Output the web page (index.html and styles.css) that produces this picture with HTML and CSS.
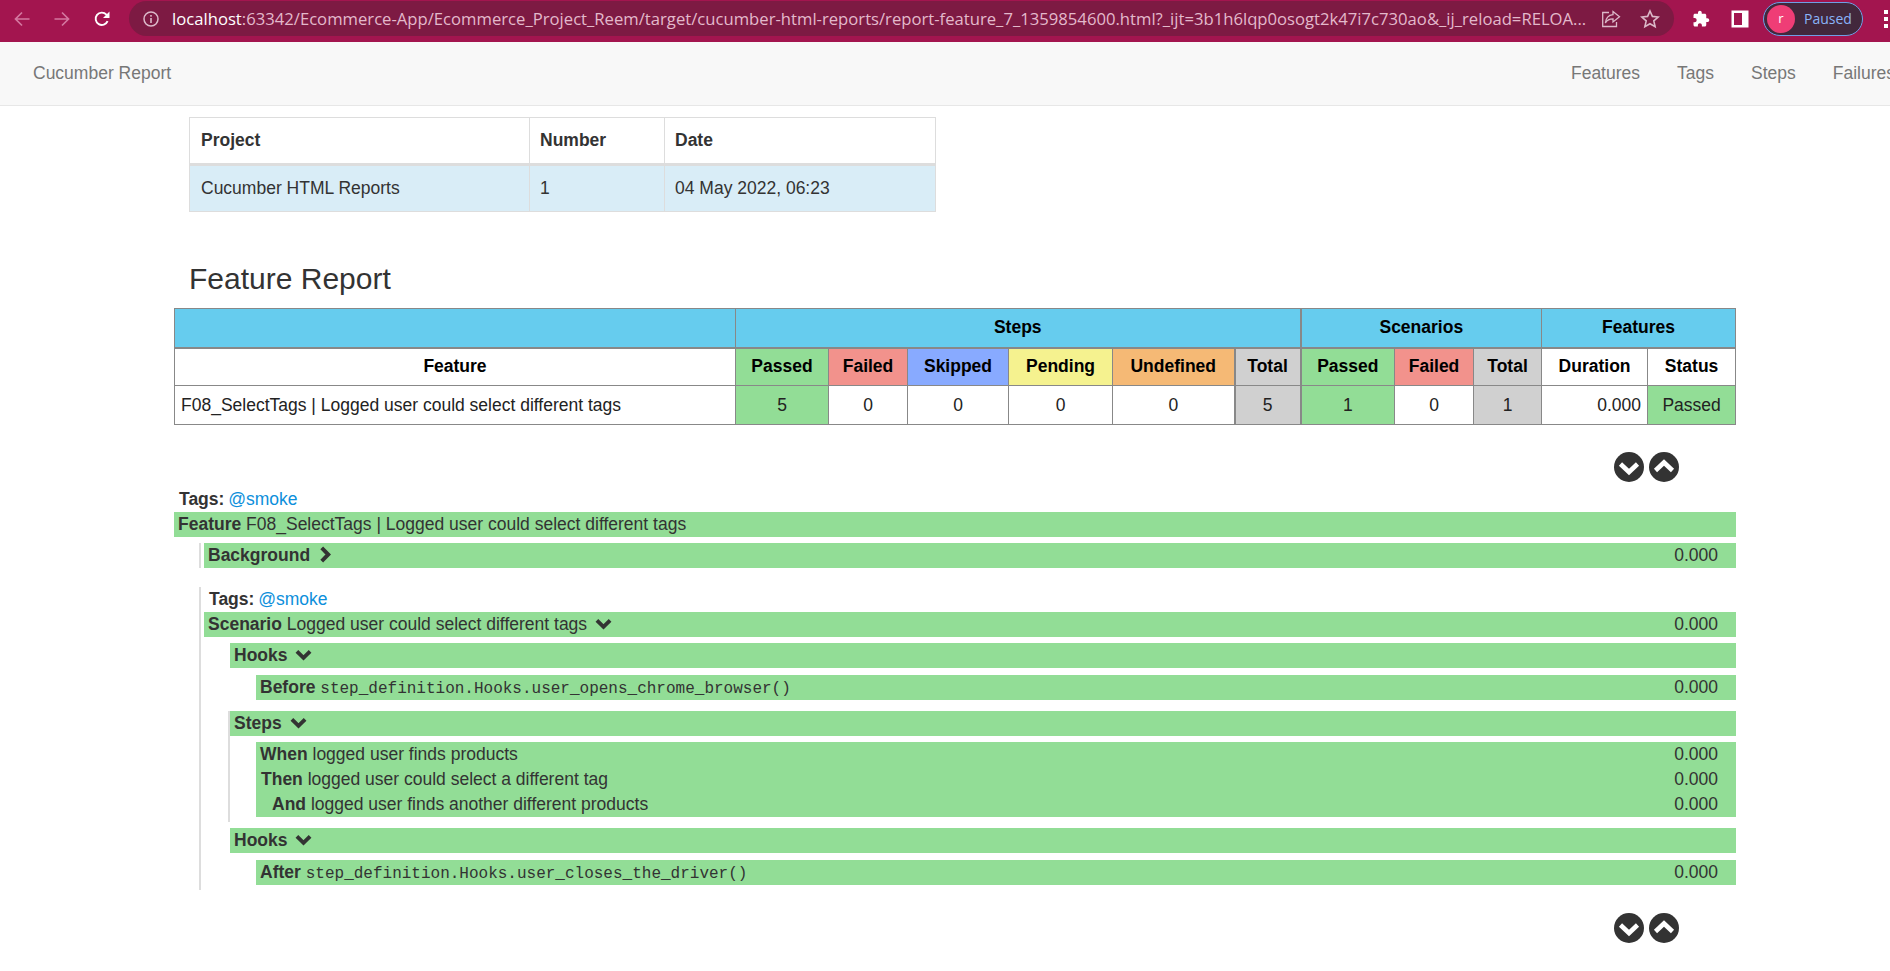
FILE: index.html
```html
<!DOCTYPE html>
<html lang="en">
<head>
    <meta charset="UTF-8">
    <title>Cucumber Report</title>
    <link rel="stylesheet" href="styles.css">
</head>
<body>
    <svg class="defs" width="0" height="0">
        <symbol id="chev-down" viewBox="0 0 16 11"><polyline points="1.8,2 8,8.2 14.2,2" fill="none" stroke="#333" stroke-width="3.6"/></symbol>
        <symbol id="chev-right" viewBox="0 0 11 15"><polyline points="2.5,1.5 8.5,7.5 2.5,13.5" fill="none" stroke="#333" stroke-width="3.6"/></symbol>
        <symbol id="btn-down" viewBox="0 0 30 30"><circle cx="15" cy="15" r="15" fill="#333"/><polyline points="6.5,12 15,20 23.5,12" fill="none" stroke="#fff" stroke-width="4.6"/></symbol>
        <symbol id="btn-up" viewBox="0 0 30 30"><circle cx="15" cy="15" r="15" fill="#333"/><polyline points="6.5,18.5 15,10.5 23.5,18.5" fill="none" stroke="#fff" stroke-width="4.6"/></symbol>
    </svg>

    <div class="toolbar">
        <svg class="tool-icon dim" viewBox="0 0 18 18"><path d="M16.5 9H2.5M9 2.5L2.5 9L9 15.5" fill="none" stroke="currentColor" stroke-width="1.7"/></svg>
        <svg class="tool-icon dim" viewBox="0 0 18 18"><path d="M1.5 9H15.5M9 2.5L15.5 9L9 15.5" fill="none" stroke="currentColor" stroke-width="1.7"/></svg>
        <svg class="tool-icon" viewBox="0 0 18 18"><path d="M14.6 11.2A6.2 6.2 0 1 1 13.4 4.6L15.5 6.6" fill="none" stroke="currentColor" stroke-width="1.9"/><path d="M16.5 1.5V8H10Z" fill="currentColor"/></svg>
        <div class="omnibox">
            <svg class="info-icon" viewBox="0 0 18 18"><circle cx="9" cy="9" r="7" fill="none" stroke="currentColor" stroke-width="1.5"/><rect x="8.2" y="8" width="1.6" height="5" fill="currentColor"/><rect x="8.2" y="5" width="1.6" height="1.7" fill="currentColor"/></svg>
            <div class="url"><span class="host">localhost</span>:63342/Ecommerce-App/Ecommerce_Project_Reem/target/cucumber-html-reports/report-feature_7_1359854600.html?_ijt=3b1h6lqp0osogt2k47i7c730ao&amp;_ij_reload=RELOA...</div>
            <svg class="omni-icon share" viewBox="0 0 20 20"><path d="M12 2.5L18.5 7.8L12 13V9.9C8 9.9 5.8 11.5 4.4 14C4.8 9.6 7.4 6.2 12 5.7Z" fill="none" stroke="currentColor" stroke-width="1.3"/><path d="M8 3.5H1.7V17.5H15.5V13" fill="none" stroke="currentColor" stroke-width="1.3"/></svg>
            <svg class="omni-icon star" viewBox="0 0 20 20"><polygon points="10,2 12.4,7.4 18.2,8 13.8,11.9 15.1,17.7 10,14.7 4.9,17.7 6.2,11.9 1.8,8 7.6,7.4" fill="none" stroke="currentColor" stroke-width="1.6"/></svg>
        </div>
        <svg class="tool-icon puzzle" viewBox="0 0 24 24"><path fill="currentColor" d="M20.5 11H19V7c0-1.1-.9-2-2-2h-4V3.5C13 2.12 11.88 1 10.5 1S8 2.12 8 3.5V5H4c-1.1 0-1.99.9-1.99 2v3.8H3.5c1.49 0 2.7 1.21 2.7 2.7s-1.21 2.7-2.7 2.7H2V20c0 1.1.9 2 2 2h3.8v-1.5c0-1.49 1.21-2.7 2.7-2.7 1.49 0 2.7 1.21 2.7 2.7V22H17c1.1 0 2-.9 2-2v-4h1.5c1.38 0 2.5-1.12 2.5-2.5S21.88 11 20.5 11z"/></svg>
        <svg class="tool-icon panel" viewBox="0 0 18 18"><path fill="currentColor" fill-rule="evenodd" d="M0.5 0.5H17.5V17.5H0.5ZM3 3V15H11V3Z"/></svg>
        <div class="profile"><span class="avatar">r</span><span class="paused">Paused</span></div>
        <div class="dots"><i></i><i></i><i></i></div>
    </div>

    <nav class="navbar">
        <a class="brand">Cucumber Report</a>
        <div class="nav-links">
            <a>Features</a>
            <a>Tags</a>
            <a>Steps</a>
            <a>Failures</a>
        </div>
    </nav>

    <table class="info-table">
        <colgroup><col class="info-a"><col class="info-b"><col class="info-c"></colgroup>
        <thead>
            <tr><th>Project</th><th>Number</th><th>Date</th></tr>
        </thead>
        <tbody>
            <tr><td>Cucumber HTML Reports</td><td>1</td><td>04 May 2022, 06:23</td></tr>
        </tbody>
    </table>

    <h2 class="page-title">Feature Report</h2>

    <main class="report">
        <table class="stats">
            <colgroup>
                <col class="w-561"><col class="w-93"><col class="w-79"><col class="w-101"><col class="w-104"><col class="w-122"><col class="w-66">
                <col class="w-94"><col class="w-79"><col class="w-68"><col class="w-106"><col class="w-88">
            </colgroup>
            <tr class="head-row">
                <th class="sky"></th>
                <th class="sky" colspan="6">Steps</th>
                <th class="sky thick" colspan="3">Scenarios</th>
                <th class="sky" colspan="2">Features</th>
            </tr>
            <tr class="sub-row">
                <th>Feature</th>
                <th class="passed">Passed</th>
                <th class="failed">Failed</th>
                <th class="skipped">Skipped</th>
                <th class="pending">Pending</th>
                <th class="undefined">Undefined</th>
                <th class="total thick">Total</th>
                <th class="passed thick">Passed</th>
                <th class="failed">Failed</th>
                <th class="total">Total</th>
                <th>Duration</th>
                <th>Status</th>
            </tr>
            <tr class="data-row">
                <td class="left">F08_SelectTags | Logged user could select different tags</td>
                <td class="passed">5</td>
                <td>0</td>
                <td>0</td>
                <td>0</td>
                <td>0</td>
                <td class="total thick">5</td>
                <td class="passed thick">1</td>
                <td>0</td>
                <td class="total">1</td>
                <td class="duration">0.000</td>
                <td class="passed">Passed</td>
            </tr>
        </table>

        <div class="expand-btns top">
            <svg class="round-btn"><use href="#btn-down"/></svg>
            <svg class="round-btn"><use href="#btn-up"/></svg>
        </div>

        <div class="tags feature-tags"><b>Tags:</b> <a>@smoke</a></div>
        <div class="bar"><span><b>Feature</b> F08_SelectTags | Logged user could select different tags</span></div>

        <div class="rail background">
            <div class="bar"><span><b>Background</b><svg class="chev right"><use href="#chev-right"/></svg></span><span>0.000</span></div>
        </div>

        <div class="rail scenario">
            <div class="tags"><b>Tags:</b> <a>@smoke</a></div>
            <div class="bar"><span><b>Scenario</b> Logged user could select different tags<svg class="chev"><use href="#chev-down"/></svg></span><span>0.000</span></div>

            <div class="group hooks">
                <div class="bar"><span><b>Hooks</b><svg class="chev"><use href="#chev-down"/></svg></span></div>
                <div class="lines">
                    <div class="bar"><span><b>Before</b> <code>step_definition.Hooks.user_opens_chrome_browser()</code></span><span>0.000</span></div>
                </div>
            </div>

            <div class="group steps">
                <div class="bar"><span><b>Steps</b><svg class="chev"><use href="#chev-down"/></svg></span></div>
                <div class="lines step-lines">
                    <div class="bar"><span><b>When</b> logged user finds products</span><span>0.000</span></div>
                    <div class="bar"><span class="kw-then"><b>Then</b> logged user could select a different tag</span><span>0.000</span></div>
                    <div class="bar"><span class="kw-and"><b>And</b> logged user finds another different products</span><span>0.000</span></div>
                </div>
            </div>

            <div class="group hooks after-steps">
                <div class="bar"><span><b>Hooks</b><svg class="chev"><use href="#chev-down"/></svg></span></div>
                <div class="lines">
                    <div class="bar"><span><b>After</b> <code>step_definition.Hooks.user_closes_the_driver()</code></span><span>0.000</span></div>
                </div>
            </div>
        </div>

        <div class="expand-btns bottom">
            <svg class="round-btn"><use href="#btn-down"/></svg>
            <svg class="round-btn"><use href="#btn-up"/></svg>
        </div>
    </main>
</body>
</html>
```

FILE: styles.css
```css
html, body{
    margin: 0;
    height: 971px;
    overflow: hidden;
}
body{
    font-family: "Liberation Sans", Arial, sans-serif;
    font-size: 17.5px;
    color: #333;
    background: #fff;
}
.defs{
    display: block;
    height: 0;
}

/* browser chrome */
.toolbar{
    display: flex;
    align-items: center;
    height: 35px;
    padding: 1px 0 6px 13px;
    background: #a3154f;
    color: #fff;
    overflow: hidden;
}
.tool-icon{
    flex: none;
    width: 18px;
    height: 18px;
    margin-right: 22px;
}
.tool-icon.dim{
    color: #d477a0;
}
.omnibox{
    flex: none;
    display: flex;
    align-items: center;
    width: 1518px;
    height: 35px;
    margin-left: -4px;
    padding: 0 14px 0 13px;
    border-radius: 18px;
    background: #7d1a43;
    color: #dcb9c9;
}
.info-icon{
    flex: none;
    width: 18px;
    height: 18px;
    margin-right: 12px;
}
.url{
    flex: 1;
    overflow: hidden;
    white-space: nowrap;
    font-family: "Open Sans", sans-serif;
    font-size: 16.67px;
    color: #e3b9cb;
}
.host{
    color: #fff;
}
.omni-icon{
    flex: none;
    width: 20px;
    height: 20px;
    margin-left: 19px;
}
.omni-icon.share{
    margin-left: 12px;
}
.puzzle{
    margin-left: 18px;
    margin-right: 21px;
}
.panel{
    margin-right: 14px;
}
.profile{
    flex: none;
    display: flex;
    align-items: center;
    box-sizing: border-box;
    width: 100px;
    height: 34px;
    padding-left: 3px;
    border: 1px solid #6f9fe6;
    border-radius: 17px;
    background: #42283c;
}
.avatar{
    width: 28px;
    height: 28px;
    border-radius: 50%;
    background: #ef3d76;
    color: #fff;
    font-family: "Open Sans", sans-serif;
    font-size: 13px;
    line-height: 27px;
    text-align: center;
}
.paused{
    margin-left: 9px;
    font-family: "Open Sans", sans-serif;
    font-size: 14px;
    color: #8ab4f8;
}
.dots{
    flex: none;
    display: flex;
    flex-direction: column;
    gap: 3px;
    margin-left: 21px;
}
.dots i{
    display: block;
    width: 4px;
    height: 4px;
    background: #fff;
}

/* report navbar */
.navbar{
    display: flex;
    align-items: center;
    height: 63px;
    padding-left: 33px;
    background: #f8f8f8;
    border-bottom: 1px solid #e7e7e7;
    color: #777;
    font-size: 17.5px;
}
.nav-links{
    flex: none;
    display: flex;
    gap: 37px;
    margin-left: auto;
    margin-right: -5px;
}

/* project table */
.info-table{
    border-collapse: collapse;
    table-layout: fixed;
    width: 746px;
    margin: 11px 0 0 189px;
    border: 1px solid #ddd;
}
.info-a{ width: 340px; }
.info-b{ width: 135px; }
.info-c{ width: 271px; }
.info-table th, .info-table td{
    padding: 0 10px;
    border: 1px solid #ddd;
    text-align: left;
}
.info-table th:first-child, .info-table td:first-child{
    padding-left: 11px;
}
.info-table th{
    height: 45px;
    border-bottom-width: 3px;
}
.info-table td{
    height: 45px;
    background: #d9edf7;
}

.page-title{
    margin: 40px 0 0 189px;
    height: 56px;
    font-size: 30px;
    font-weight: 400;
    line-height: 54px;
}

/* stats table */
.report{
    width: 1562px;
    margin-left: 174px;
}
.stats{
    border-collapse: collapse;
    table-layout: fixed;
    width: 1561px;
    color: #222;
}
.w-561{ width: 561px; }
.w-93{ width: 93px; }
.w-79{ width: 79px; }
.w-101{ width: 101px; }
.w-104{ width: 104px; }
.w-122{ width: 122px; }
.w-66{ width: 66px; }
.w-94{ width: 94px; }
.w-68{ width: 68px; }
.w-106{ width: 106px; }
.w-88{ width: 88px; }
.stats th, .stats td{
    padding: 0 6px;
    border: 1px solid #888;
    text-align: center;
}
.stats th{
    color: #000;
}
.head-row{ height: 39px; }
.head-row th{ border-bottom-width: 2px; }
.sub-row{ height: 38px; }
.data-row{ height: 39px; }
.stats .left{ text-align: left; }
.stats .duration{ text-align: right; }
.stats .thick{ border-left-width: 2px; }
.sky{ background: #66ccee; }
.passed{ background: #92dd96; }
.failed{ background: #f2928c; }
.skipped{ background: #88aaff; }
.pending{ background: #f5f28f; }
.undefined{ background: #f5b975; }
.total{ background: #d0d0d0; }

.expand-btns{
    display: flex;
    justify-content: flex-end;
    gap: 5px;
    padding-right: 57px;
}
.expand-btns.top{ margin-top: 27px; }
.expand-btns.bottom{ margin-top: 23px; }
.round-btn{
    width: 30px;
    height: 30px;
}

/* feature tree */
.tags{
    height: 25px;
    padding-left: 5px;
    line-height: 25px;
}
.feature-tags{ margin-top: 5px; }
.tags a{
    margin-left: -1px;
    color: #0d8fdb;
}
.bar{
    display: flex;
    justify-content: space-between;
    height: 25px;
    padding: 0 18px 0 4px;
    background: #92dd96;
    line-height: 25px;
}
.chev{
    width: 17px;
    height: 12px;
    margin-left: 8px;
}
.chev.right{
    width: 12px;
    height: 17px;
    margin-left: 9px;
    vertical-align: -2px;
}
code{
    font-family: "Liberation Mono", monospace;
    font-size: 16px;
}
.rail{
    margin-left: 25px;
    padding-left: 3px;
    border-left: 2px solid #ddd;
}
.background{ margin-top: 6px; }
.scenario{
    margin-top: 19px;
    padding-bottom: 5px;
}
.group{
    margin-top: 6px;
    margin-left: 26px;
}
.group.steps{
    margin-top: 11px;
    margin-left: 24px;
    padding-bottom: 5px;
    border-left: 2px solid #ddd;
}
.lines{
    margin-top: 7px;
    margin-left: 26px;
}
.step-lines{ margin-top: 6px; }
.kw-then{ margin-left: 1px; }
.kw-and{ margin-left: 12px; }
```
